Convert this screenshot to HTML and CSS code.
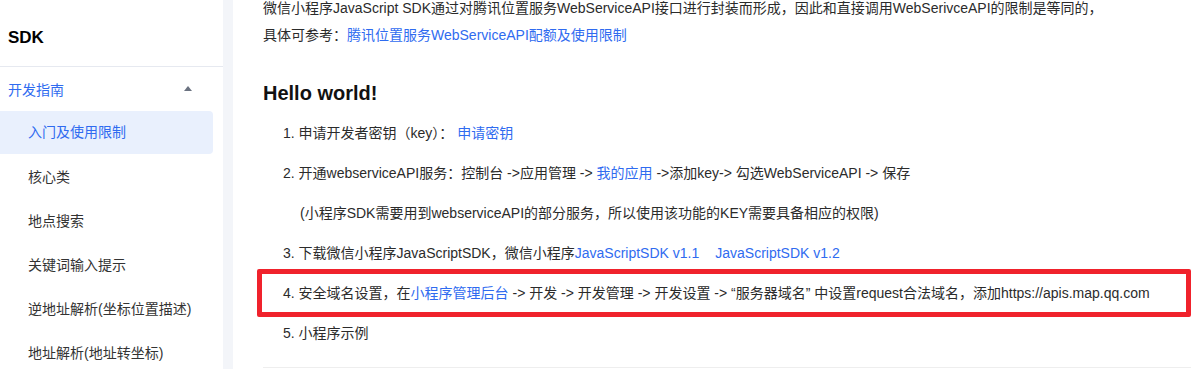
FILE: index.html
```html
<!DOCTYPE html>
<html lang="zh-CN">
<head>
<meta charset="utf-8">
<title>SDK 开发指南</title>
<link rel="stylesheet" href="styles.css">
</head>
<body>
<div class="page">
  <aside class="sidebar">
    <div class="sidebar-title">SDK</div>
    <div class="group-head">
      <span class="group-name">开发指南</span>
      <span class="caret"></span>
    </div>
    <ul class="nav">
      <li class="nav-item active">入门及使用限制</li>
      <li class="nav-item">核心类</li>
      <li class="nav-item">地点搜索</li>
      <li class="nav-item">关键词输入提示</li>
      <li class="nav-item">逆地址解析(坐标位置描述)</li>
      <li class="nav-item">地址解析(地址转坐标)</li>
    </ul>
  </aside>
  <div class="gutter"></div>
  <main class="content">
    <p class="intro">微信小程序JavaScript SDK通过对腾讯位置服务WebServiceAPI接口进行封装而形成，因此和直接调用WebSerivceAPI的限制是等同的，<br>具体可参考：<a class="link" href="#">腾讯位置服务WebServiceAPI配额及使用限制</a></p>
    <h2 class="heading">Hello world!</h2>
    <ol class="steps">
      <li class="step">1. 申请开发者密钥（key）： <a class="link" href="#">申请密钥</a></li>
      <li class="step">2. 开通webserviceAPI服务：控制台 -&gt;应用管理 -&gt; <a class="link" href="#">我的应用</a> -&gt;添加key-&gt; 勾选WebServiceAPI -&gt; 保存</li>
      <li class="step sub">(小程序SDK需要用到webserviceAPI的部分服务，所以使用该功能的KEY需要具备相应的权限)</li>
      <li class="step">3. 下载微信小程序JavaScriptSDK，微信小程序<a class="link" href="#">JavaScriptSDK v1.1</a><a class="link gap" href="#">JavaScriptSDK v1.2</a></li>
      <li class="step marked">4. 安全域名设置，在<a class="link" href="#">小程序管理后台</a> -&gt; 开发 -&gt; 开发管理 -&gt; 开发设置 -&gt; “服务器域名” 中设置request合法域名，添加https://apis.map.qq.com</li>
      <li class="step">5. 小程序示例</li>
    </ol>
    <div class="divider"></div>
  </main>
</div>
</body>
</html>
```
FILE: styles.css
```css
* { box-sizing: border-box; }
html, body {
  margin: 0;
  padding: 0;
  background: #ffffff;
  overflow: hidden;
}
body {
  font-family: "Liberation Sans", "Noto Sans CJK SC", sans-serif;
  font-size: 14px;
  color: #2b2b2b;
}
.page {
  display: flex;
  width: 1203px;
  height: 369px;
  overflow: hidden;
}
.sidebar {
  width: 223px;
  flex: none;
  padding-right: 10px;
}
.sidebar-title {
  height: 67px;
  padding: 26px 0 0 8px;
  font-size: 17px;
  line-height: 24px;
  font-weight: bold;
  color: #000000;
  border-bottom: 1px solid #e6e9f0;
  margin-right: -10px;
}
.group-head {
  height: 44px;
  display: flex;
  align-items: center;
  justify-content: space-between;
  padding: 0 21px 0 8px;
}
.group-name {
  color: #2f6bf0;
  font-size: 14px;
}
.caret {
  width: 0;
  height: 0;
  border-left: 4px solid transparent;
  border-right: 4px solid transparent;
  border-bottom: 5px solid #6b7280;
  margin-top: -2px;
}
.nav {
  list-style: none;
  margin: 0;
  padding: 0;
}
.nav-item {
  height: 44px;
  line-height: 44px;
  padding-left: 28px;
  color: #333333;
  white-space: nowrap;
}
.nav-item.active {
  background: #e9f0fd;
  color: #2f6bf0;
  border-radius: 0 4px 4px 0;
  height: 43px;
  line-height: 42px;
  margin-bottom: 1px;
}
.gutter {
  width: 10px;
  flex: none;
  background: #f3f5f9;
}
.content {
  flex: 1;
  padding: 0 12px 0 30px;
}
.intro {
  margin: -5px 0 0;
  line-height: 27px;
  white-space: nowrap;
}
.link {
  color: #2f6bf0;
  text-decoration: none;
}
.link.gap {
  margin-left: 16px;
}
.heading {
  margin: 30px 0 0;
  font-size: 20px;
  line-height: 28px;
  font-weight: bold;
  color: #111111;
}
.steps {
  list-style: none;
  margin: 6px 0 0;
  padding: 0;
}
.step {
  height: 40px;
  line-height: 40px;
  padding-left: 20px;
  white-space: nowrap;
}
.step.sub {
  padding-left: 37px;
}
.step.marked {
  position: relative;
}
.step.marked::after {
  content: "";
  position: absolute;
  left: -6px;
  right: 0;
  top: -4px;
  bottom: -4px;
  border: 5px solid #f0222c;
  border-radius: 2px;
}
.divider {
  margin-top: 14px;
  border-top: 1px solid #eeeeee;
}
```
